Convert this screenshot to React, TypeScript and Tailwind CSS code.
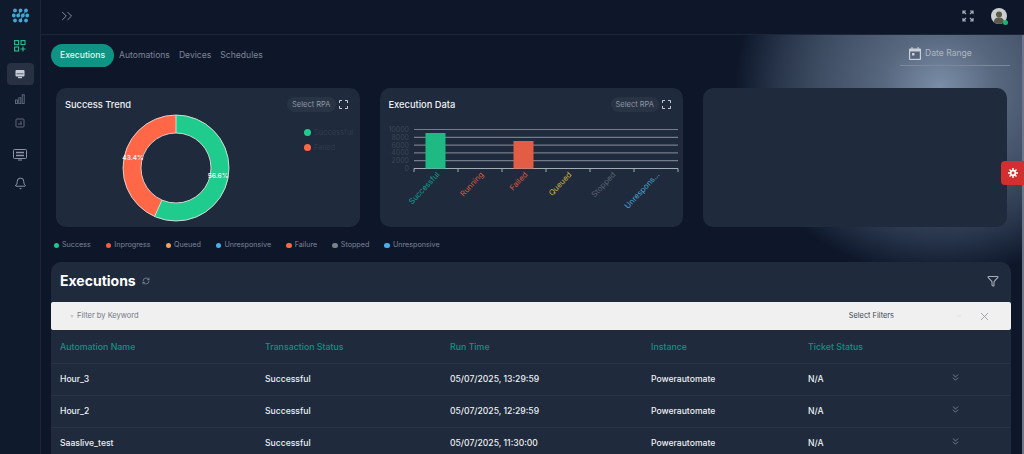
import { Bell, ChevronDown, ChevronsDown, ChevronsRight, Funnel, RefreshCw, X } from 'lucide-react';

const tabs = ['Automations', 'Devices', 'Schedules'];

const legend = [
  { label: 'Success', dot: 'bg-[#22c58b]' },
  { label: 'Inprogress', dot: 'bg-[#f4603f]' },
  { label: 'Queued', dot: 'bg-[#f0a35e]' },
  { label: 'Unresponsive', dot: 'bg-[#4aaee8]' },
  { label: 'Failure', dot: 'bg-[#ff6647]' },
  { label: 'Stopped', dot: 'bg-[#7b8088]' },
  { label: 'Unresponsive', dot: 'bg-[#4aaee8]' },
];

const rows = [
  { name: 'Hour_3', status: 'Successful', time: '05/07/2025, 13:29:59', instance: 'Powerautomate', ticket: 'N/A' },
  { name: 'Hour_2', status: 'Successful', time: '05/07/2025, 12:29:59', instance: 'Powerautomate', ticket: 'N/A' },
  { name: 'Saaslive_test', status: 'Successful', time: '05/07/2025, 11:30:00', instance: 'Powerautomate', ticket: 'N/A' },
];

const gridCols = 'grid grid-cols-[205px_185px_201px_157px_147px_1fr]';

function Logo() {
  const dots = [
    [3, 2.500], [8.500, 2.500], [14, 2.500], [1.800, 7.500], [6.200, 7.500], [10.800, 7.500], [15.200, 7.500], [3, 12.500], [8.500, 12.500], [14, 12.500],
  ];
  return (
    <svg width="17" height="15" viewBox="0 0 17 15" fill="#3fa9d6">
      {dots.map(([x, y]) => (
        <circle key={`${x}-${y}`} cx={x} cy={y} r="1.900" />
      ))}
      <path d="M8.500 2.500 6.200 7.500M14 2.500l-3.200 5M10.800 7.500 8.500 12.500" stroke="#3fa9d6" strokeWidth="0.900" />
    </svg>
  );
}

function AppsIcon() {
  return (
    <svg width="12" height="12" viewBox="0 0 12 12" fill="none" stroke="#1fc48f" strokeWidth="1.100">
      <rect x="0.600" y="0.600" width="4" height="4" />
      <rect x="7" y="0.600" width="4" height="4" />
      <rect x="0.600" y="7" width="4" height="4" />
      <path d="M9 6.500v5M6.500 9h5" />
    </svg>
  );
}

function MonitorIcon() {
  return (
    <svg width="10" height="10" viewBox="0 0 10 10" fill="#c8ced8">
      <rect x="0.500" y="1" width="9" height="6.500" rx="1" />
      <rect x="1.500" y="4.500" width="7" height="0.700" fill="#2b3444" />
      <rect x="3" y="8" width="4" height="1.200" />
    </svg>
  );
}

function BarsIcon() {
  return (
    <svg width="10" height="10" viewBox="0 0 10 10" fill="none" stroke="#667080" strokeWidth="0.900">
      <rect x="0.500" y="6" width="2" height="3.500" />
      <rect x="3.800" y="3.800" width="2" height="5.700" />
      <rect x="7.200" y="0.800" width="2" height="8.700" />
    </svg>
  );
}

function BoxIcon() {
  return (
    <svg width="10" height="10" viewBox="0 0 10 10" fill="none" stroke="#667080" strokeWidth="0.900">
      <rect x="1" y="1" width="8" height="8" rx="0.800" />
      <path d="M3 6h4M6 3v3" />
    </svg>
  );
}

function KeyboardIcon() {
  return (
    <svg width="14" height="12" viewBox="0 0 14 12" fill="none" stroke="#8b94a3" strokeWidth="1">
      <rect x="0.500" y="0.500" width="13" height="9" rx="1" />
      <path d="M3 3.500h8M3 6.500h8" strokeWidth="1.400" />
      <path d="M5 11h4" />
    </svg>
  );
}

function ExpandArrows() {
  return (
    <svg width="12" height="12" viewBox="0 0 12 12" fill="none" stroke="#a5adba" strokeWidth="1.200">
      <path d="M1 4V1h3M1 1l3 3M11 4V1H8M11 1 8 4M1 8v3h3M1 11l3-3M11 8v3H8M11 11 8 8" />
    </svg>
  );
}

function Corners() {
  return (
    <svg width="9" height="9" viewBox="0 0 9 9" fill="none" stroke="#c4cad4" strokeWidth="1">
      <path d="M.5 3V.5H3M6 .5h2.500V3M.5 6v2.500H3M6 8.500h2.500V6" />
    </svg>
  );
}

function CalendarIcon() {
  return (
    <svg width="12" height="13" viewBox="0 0 12 13" fill="#c9d0da">
      <path d="M2.500 0h1v1.500h5V0h1v1.500H11a1 1 0 0 1 1 1V12a1 1 0 0 1-1 1H1a1 1 0 0 1-1-1V2.500a1 1 0 0 1 1-1h1.500z" />
      <rect x="1.200" y="4.500" width="9.600" height="7.300" fill="#55647a" />
      <rect x="3" y="6" width="2.500" height="2.500" fill="#c9d0da" />
    </svg>
  );
}

function GearIcon() {
  return (
    <svg width="10" height="10" viewBox="0 0 10 10" fill="none" stroke="#fff">
      <circle cx="5" cy="5" r="2.300" strokeWidth="1.700" />
      <path d="M5 0v2M5 8v2M0 5h2M8 5h2M1.500 1.500 3 3M7 7l1.500 1.500M8.500 1.500 7 3M3 7 1.500 8.500" strokeWidth="1.400" />
    </svg>
  );
}

function Avatar() {
  return (
    <div className="relative h-4 w-4">
      <svg width="16" height="16" viewBox="0 0 16 16">
        <circle cx="8" cy="8" r="8" fill="#c9ced0" />
        <circle cx="8" cy="6.500" r="3" fill="#5b5a48" />
        <path d="M2.800 14c.6-3.500 2.500-4.500 5.200-4.500s4.600 1 5.200 4.500A8 8 0 0 1 8 16a8 8 0 0 1-5.200-2z" fill="#5b5a48" />
      </svg>
      <span className="absolute -right-px -bottom-px h-[5px] w-[5px] rounded-full bg-[#14b86f]" />
    </div>
  );
}

function Donut() {
  const r = 44;
  const c = 2 * Math.PI * r;
  const green = c * 0.566;
  return (
    <svg width="110" height="110" viewBox="0 0 110 110">
      <circle cx="55" cy="55" r={r} fill="none" stroke="#ff6746" strokeWidth="18" />
      <circle
        cx="55"
        cy="55"
        r={r}
        fill="none"
        stroke="#20cb8e"
        strokeWidth="18"
        strokeDasharray={`${green} ${c - green}`}
        transform="rotate(-90 55 55)"
      />
      <g fill="none" stroke="#e8e8e8" strokeWidth="0.800">
        <circle cx="55" cy="55" r="53" />
        <circle cx="55" cy="55" r="35" />
        <path d="M55 2v18M41 87l-7.400 16.500" />
      </g>
      <g fill="#f4f6f8" fontSize="6.500" fontWeight="600" textAnchor="middle">
        <text x="12" y="47">43.4%</text>
        <text x="97" y="64.500">56.6%</text>
      </g>
    </svg>
  );
}

function BarChart() {
  const lines = [0, 2000, 4000, 6000, 8000, 10000];
  const ticks = [0, 1, 2, 3, 4, 5, 6];
  const labels = [
    { text: 'Successful', fill: '#12a08f' },
    { text: 'Running', fill: '#d9583f' },
    { text: 'Failed', fill: '#d9583f' },
    { text: 'Queued', fill: '#cdb23f' },
    { text: 'Stopped', fill: '#596273' },
    { text: 'Unrespons...', fill: '#4aa6d4' },
  ];
  return (
    <svg width="304" height="100" viewBox="0 0 304 100" className="block">
      {lines.map((v, i) => (
        <g key={v}>
          <line x1="34" x2="298" y1={47.500 - i * 7.800} y2={47.500 - i * 7.800} stroke={i === 0 ? '#a5abb4' : '#757d8a'} strokeWidth="1.200" />
          <text x="29" y={50 - i * 7.800} textAnchor="end" fontSize="7" fill="#3b4657">{v}</text>
        </g>
      ))}
      <rect x="45.500" y="12" width="20" height="35.500" fill="#1fba84" />
      <rect x="133.500" y="20" width="20" height="27.500" fill="#e35c44" />
      {ticks.map((t) => (
        <line key={t} x1={34 + t * 44} x2={34 + t * 44} y1="47.500" y2="51" stroke="#a5abb4" />
      ))}
      {labels.map((l, i) => (
        <text
          key={l.text}
          textAnchor="end"
          fontSize="7.800"
          fill={l.fill}
          transform={`translate(${60 + i * 44} 54) rotate(-47)`}
        >
          {l.text}
        </text>
      ))}
    </svg>
  );
}

function CardHeader({ title }: { title: string }) {
  return (
    <div className="flex items-center justify-between pr-[3px]">
      <h3 className="text-[9.300px] leading-none font-medium text-[#eef1f5]">{title}</h3>
      <div className="flex items-center gap-[3px]">
        <span className="rounded-full bg-[#283344] px-[5px] py-[3px] text-[7.500px] leading-[9px] text-[#8f98a7]">Select RPA</span>
        <Corners />
      </div>
    </div>
  );
}

export default function App() {
  return (
    <div className="flex h-[454px] w-[1024px] overflow-hidden bg-[#0e172a] font-['Inter',sans-serif]">
      <aside className="flex w-[41px] shrink-0 flex-col items-center border-r border-[#1c2638] bg-[#0f1a2d] pt-[8px]">
        <Logo />
        <div className="mt-[17px] h-[12px]">
          <AppsIcon />
        </div>
        <div className="mt-[11px] flex h-[22px] w-[27px] items-center justify-center rounded-[4px] bg-[#273142]">
          <MonitorIcon />
        </div>
        <div className="mt-[9px] h-[10px]">
          <BarsIcon />
        </div>
        <div className="mt-[14px] h-[10px]">
          <BoxIcon />
        </div>
        <div className="mt-[21px] h-[12px]">
          <KeyboardIcon />
        </div>
        <Bell className="mt-[16px] text-[#aab2bf]" size={13} strokeWidth={1.500} />
      </aside>

      <div className="flex min-w-0 flex-1 flex-col">
        <header className="flex h-[35px] shrink-0 items-center border-b border-[#1c2638] pr-[17px] pb-[3px] pl-[17px]">
          <ChevronsRight className="text-[#8f98a7]" size={18} strokeWidth={1.200} />
          <div className="ml-auto flex items-center gap-[17px]">
            <ExpandArrows />
            <Avatar />
          </div>
        </header>

        <div className="relative flex min-h-0 flex-1 bg-[radial-gradient(ellipse_205px_190px_at_899px_52px,#7b8da7_0%,#58687f_27%,#3c4a60_62%,#27344a_80%,#0e172a_100%)]">
          <main className="min-w-0 flex-1 pt-[9px] pl-[10px]">
            <div className="flex h-[23px] items-center pr-[12px]">
              <span className="flex h-[23px] w-[63px] items-center justify-center rounded-full bg-[#0f9384] pb-px text-[8.600px] font-medium text-[#e6f5f2]">
                Executions
              </span>
              <div className="ml-[5px] flex gap-[9px] pb-px">
                {tabs.map((t) => (
                  <span key={t} className="text-[8.600px] text-[#7c8596]">{t}</span>
                ))}
              </div>
              <div className="-mt-[3px] ml-auto flex h-[24px] w-[110px] items-center gap-[4px] border-b border-[#7a899c] pb-[1px] pl-[9px]">
                <CalendarIcon />
                <span className="text-[8.600px] text-[#aeb6c2]">Date Range</span>
              </div>
            </div>

            <div className="mt-[21px] grid grid-cols-[303.500px_303.500px_304px] gap-[20px] px-[5px]">
              <section className="h-[139px] rounded-[10px] bg-[#1f2a3c] px-[9px] pt-[9px]">
                <CardHeader title="Success Trend" />
                <div className="relative mt-[1px] ml-[56px] w-[110px]">
                  <Donut />
                  <div className="absolute top-[15px] left-[183px] flex flex-col gap-[6px]">
                    <span className="flex items-center gap-[3px] text-[7.500px] leading-[9px] text-[#2f3b4d]">
                      <i className="h-[7px] w-[7px] rounded-full bg-[#20cb8e]" />Successful
                    </span>
                    <span className="flex items-center gap-[3px] text-[7.500px] leading-[9px] text-[#2f3b4d]">
                      <i className="h-[7px] w-[7px] rounded-full bg-[#ff6746]" />Failed
                    </span>
                  </div>
                </div>
              </section>

              <section className="h-[139px] rounded-[10px] bg-[#1f2a3c] pt-[9px]">
                <div className="px-[9px]">
                  <CardHeader title="Execution Data" />
                </div>
                <div className="mt-[9px]">
                  <BarChart />
                </div>
              </section>

              <section className="h-[139px] rounded-[10px] bg-[#1f2a3c]" />
            </div>

            <div className="mt-[13px] flex h-[11px] items-center gap-[15px] pl-[2.500px]">
              {legend.map((l, i) => (
                <span key={`${l.label}-${i}`} className="flex items-center gap-[3px] text-[7.200px] text-[#7c8596]">
                  <i className={`h-[5.500px] w-[5.500px] rounded-full ${l.dot}`} />
                  {l.label}
                </span>
              ))}
            </div>

            <section className="mt-[11px] w-[960px] rounded-t-[10px] bg-[#1f2a3c]">
              <div className="flex h-[40px] items-center pr-[12px] pb-[3px] pl-[9px]">
                <h2 className="text-[14px] font-bold text-white">Executions</h2>
                <RefreshCw className="ml-[6px] text-[#8f98a7]" size={8} />
                <Funnel className="ml-auto text-[#a5adba]" size={12} strokeWidth={2.200} />
              </div>
              <div className="flex h-[28px] items-center rounded-[2px] bg-[#f0f0f0] pr-[20px] pl-[19px]">
                <span className="h-0 w-0 border-x-[2.500px] border-t-[3px] border-x-transparent border-t-[#c5cfcc]" />
                <span className="ml-[3px] text-[7.500px] text-[#727987]">Filter by Keyword</span>
                <span className="ml-auto text-[7.400px] text-[#3d4655]">Select Filters</span>
                <ChevronDown className="ml-[62px] text-[#cfd2d6]" size={6} />
                <X className="ml-[16px] text-[#8f96a0]" size={13} strokeWidth={1.500} />
              </div>
              <div className={`${gridCols} h-[34px] items-center border-b border-[#27334a] pl-[9px] text-[8.800px] font-medium text-[#0f9384]`}>
                <span>Automation Name</span>
                <span>Transaction Status</span>
                <span>Run Time</span>
                <span>Instance</span>
                <span>Ticket Status</span>
              </div>
              {rows.map((r) => (
                <div key={r.name} className={`${gridCols} h-[32px] items-center border-b border-[#27334a] pl-[9px] text-[8.600px] font-medium text-[#eef1f5]`}>
                  <span>{r.name}</span>
                  <span>{r.status}</span>
                  <span>{r.time}</span>
                  <span>{r.instance}</span>
                  <span>{r.ticket}</span>
                  <ChevronsDown className="-mt-[4px] -ml-[5px] text-[#98a1ae]" size={11} strokeWidth={1.500} />
                </div>
              ))}
            </section>
          </main>
          <div className="w-[2px] shrink-0 bg-[#6c7686]" />
          <div className="absolute top-[126px] right-0 flex h-[24px] w-[23px] items-center justify-center rounded-l-[4px] bg-[#d32f2f]">
            <GearIcon />
          </div>
        </div>
      </div>
    </div>
  );
}
